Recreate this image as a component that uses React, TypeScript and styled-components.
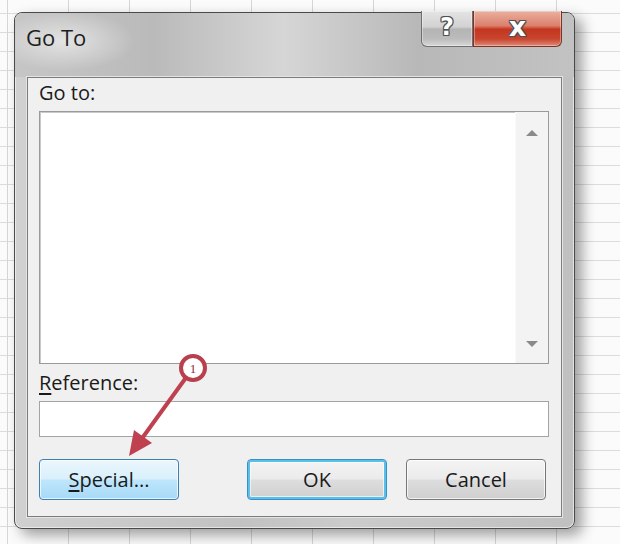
import React from "react";
import styled, { createGlobalStyle } from "styled-components";

const GlobalStyle = createGlobalStyle`
  html, body {
    margin: 0;
    padding: 0;
  }
  body {
    font-family: "Open Sans", "Noto Sans", sans-serif;
    background: #fff;
  }
`;

const Page = styled.div`
  position: relative;
  width: 620px;
  height: 544px;
  overflow: hidden;
  padding: 12px 0 0 14px;
  box-sizing: border-box;
  background-color: #fbfbfb;
  background-image:
    repeating-linear-gradient(90deg, transparent 0 60px, #d6d6d6 60px 61px),
    repeating-linear-gradient(180deg, transparent 0 18px, #dcdcdc 18px 19px);
  background-position: -53px 0, 0 -5px;
`;

const Window = styled.div`
  width: 561px;
  height: 517px;
  box-sizing: border-box;
  border: 1px solid #4a4a4a;
  border-radius: 8px;
  background: linear-gradient(90deg, #d0d0d0, #c2c2c2 40%, #cbcbcb 60%, #c0c0c0);
  box-shadow:
    inset 0 0 0 1px rgba(255, 255, 255, 0.55),
    7px 6px 14px rgba(0, 0, 0, 0.38);
  display: flex;
  flex-direction: column;
`;

const TitleBar = styled.div`
  height: 64px;
  flex: none;
  display: flex;
  justify-content: space-between;
  align-items: flex-start;
  padding: 0 12px 0 11px;
  border-radius: 7px 7px 0 0;
  background:
    radial-gradient(ellipse 70px 30px at 50px 28px, rgba(255, 255, 255, 0.55), transparent),
    linear-gradient(90deg, #c6c6c6 0%, #bababa 25%, #d6d6d6 48%, #b8b8b8 72%, #c2c2c2 100%);
`;

const Title = styled.div`
  margin-top: 9px;
  font-size: 22px;
  line-height: 30px;
  color: #1e1e1e;
`;

const Caption = styled.div`
  display: flex;
  margin-top: -2px;
`;

const CaptionButton = styled.div<{ $kind: "help" | "close" }>`
  height: 36px;
  width: ${(p) => (p.$kind === "help" ? "52px" : "89px")};
  box-sizing: border-box;
  display: flex;
  align-items: center;
  justify-content: center;
  font-family: "DejaVu Sans", sans-serif;
  font-weight: bold;
  color: #fff;
  font-size: ${(p) => (p.$kind === "help" ? "24px" : "27px")};
  text-shadow:
    1px 0 0 #505050, -1px 0 0 #505050, 0 1px 0 #505050, 0 -1px 0 #505050,
    1px 1px 0 #505050, -1px -1px 0 #505050, 1px -1px 0 #505050, -1px 1px 0 #505050;
  border: 1px solid ${(p) => (p.$kind === "help" ? "#6f6f6f" : "#7b3428")};
  border-top: none;
  border-radius: ${(p) => (p.$kind === "help" ? "0 0 0 6px" : "0 0 6px 0")};
  background: ${(p) =>
    p.$kind === "help"
      ? "linear-gradient(180deg, #e4e4e4 0%, #d2d2d2 45%, #b4b4b4 52%, #bcbcbc 80%, #d8d8d8 100%)"
      : "linear-gradient(180deg, #eab0a0 0%, #dc806c 42%, #c4361f 52%, #c9452f 80%, #de8a76 100%)"};
  box-shadow: inset 0 0 0 1px rgba(255, 255, 255, 0.35);
  padding-bottom: 4px;
`;

const Frame = styled.div`
  flex: 1;
  display: flex;
  padding: 0 12px 12px 12px;
`;

const Client = styled.div`
  flex: 1;
  display: flex;
  flex-direction: column;
  padding: 4px 12px 16px 11px;
  background: #f0f0f0;
  border: 1px solid #7c7c7c;
  box-shadow: 0 0 0 1px #e4e4e4;
`;

const Label = styled.div`
  font-size: 20px;
  line-height: 22px;
  height: 22px;
  color: #1a1a1a;
  margin-bottom: 7px;

  u {
    text-decoration-thickness: 2px;
    text-underline-offset: 3px;
  }
`;

const ListBox = styled.div`
  height: 253px;
  box-sizing: border-box;
  display: flex;
  background: #fff;
  border: 1px solid #9a9a9a;
  box-shadow: inset 1px 1px 0 #c9c9c9;
  margin-bottom: 8px;
`;

const ListArea = styled.div`
  flex: 1;
`;

const ScrollBar = styled.div`
  width: 32px;
  display: flex;
  flex-direction: column;
  justify-content: space-between;
  align-items: center;
  padding: 18px 0 16px;
  background: #f3f3f3;
  border-left: 1px solid #fafafa;
`;

const Arrow = styled.div<{ $dir: "up" | "down" }>`
  width: 0;
  height: 0;
  border-left: 6px solid transparent;
  border-right: 6px solid transparent;
  ${(p) =>
    p.$dir === "up"
      ? "border-bottom: 6px solid #8a8a8a;"
      : "border-top: 6px solid #8a8a8a;"}
`;

const Input = styled.div`
  height: 36px;
  box-sizing: border-box;
  background: #fff;
  border: 1px solid #a4a4a4;
  margin-bottom: 22px;
`;

const ButtonRow = styled.div`
  display: flex;
  height: 41px;
`;

const Button = styled.div<{ $variant: "hover" | "default" | "normal" }>`
  width: 140px;
  height: 41px;
  box-sizing: border-box;
  display: flex;
  align-items: center;
  justify-content: center;
  font-size: 20px;
  color: #1a1a1a;
  border-radius: 4px;
  border: 1px solid
    ${(p) =>
      p.$variant === "hover" ? "#3c7fb1" : p.$variant === "default" ? "#3c8fc4" : "#777"};
  background: ${(p) =>
    p.$variant === "hover"
      ? "linear-gradient(180deg, #eaf6fd 0%, #d9f0fc 48%, #bee6fd 52%, #a7d9f5 100%)"
      : "linear-gradient(180deg, #f4f4f4 0%, #ebebeb 48%, #dddddd 52%, #cfcfcf 100%)"};
  box-shadow: ${(p) =>
    p.$variant === "default"
      ? "inset 0 0 0 2px #59c0ea, inset 0 0 0 3px rgba(255,255,255,.6)"
      : "inset 0 0 0 1px rgba(255,255,255,.7)"};
  margin-right: ${(p) => (p.$variant === "hover" ? "68px" : p.$variant === "default" ? "19px" : "0")};

  u {
    text-decoration-thickness: 2px;
    text-underline-offset: 3px;
  }
`;

const Overlay = styled.svg`
  position: absolute;
  left: 0;
  top: 0;
  pointer-events: none;
`;

function Annotation() {
  return (
    <Overlay width={620} height={544} viewBox="0 0 620 544">
      <line x1={185} y1={379} x2={143} y2={437} stroke="#bf4150" strokeWidth={4} strokeLinecap="round" />
      <polygon points="129,456 152,443 134,430" fill="#bf4150" />
      <circle cx={193} cy={368} r={12} fill="#fff" stroke="#b83f4d" strokeWidth={4} />
      <text
        x={193}
        y={373}
        textAnchor="middle"
        fontSize={13}
        fontFamily="'Liberation Serif', serif"
        fill="#8c2d3a"
      >
        1
      </text>
    </Overlay>
  );
}

export default function App() {
  return (
    <>
      <GlobalStyle />
      <Page>
        <Window>
          <TitleBar>
            <Title>Go To</Title>
            <Caption>
              <CaptionButton $kind="help">?</CaptionButton>
              <CaptionButton $kind="close">x</CaptionButton>
            </Caption>
          </TitleBar>
          <Frame>
            <Client>
              <Label>Go to:</Label>
              <ListBox>
                <ListArea />
                <ScrollBar>
                  <Arrow $dir="up" />
                  <Arrow $dir="down" />
                </ScrollBar>
              </ListBox>
              <Label>
                <u>R</u>eference:
              </Label>
              <Input />
              <ButtonRow>
                <Button $variant="hover">
                  <u>S</u>pecial...
                </Button>
                <Button $variant="default">OK</Button>
                <Button $variant="normal">Cancel</Button>
              </ButtonRow>
            </Client>
          </Frame>
        </Window>
        <Annotation />
      </Page>
    </>
  );
}
